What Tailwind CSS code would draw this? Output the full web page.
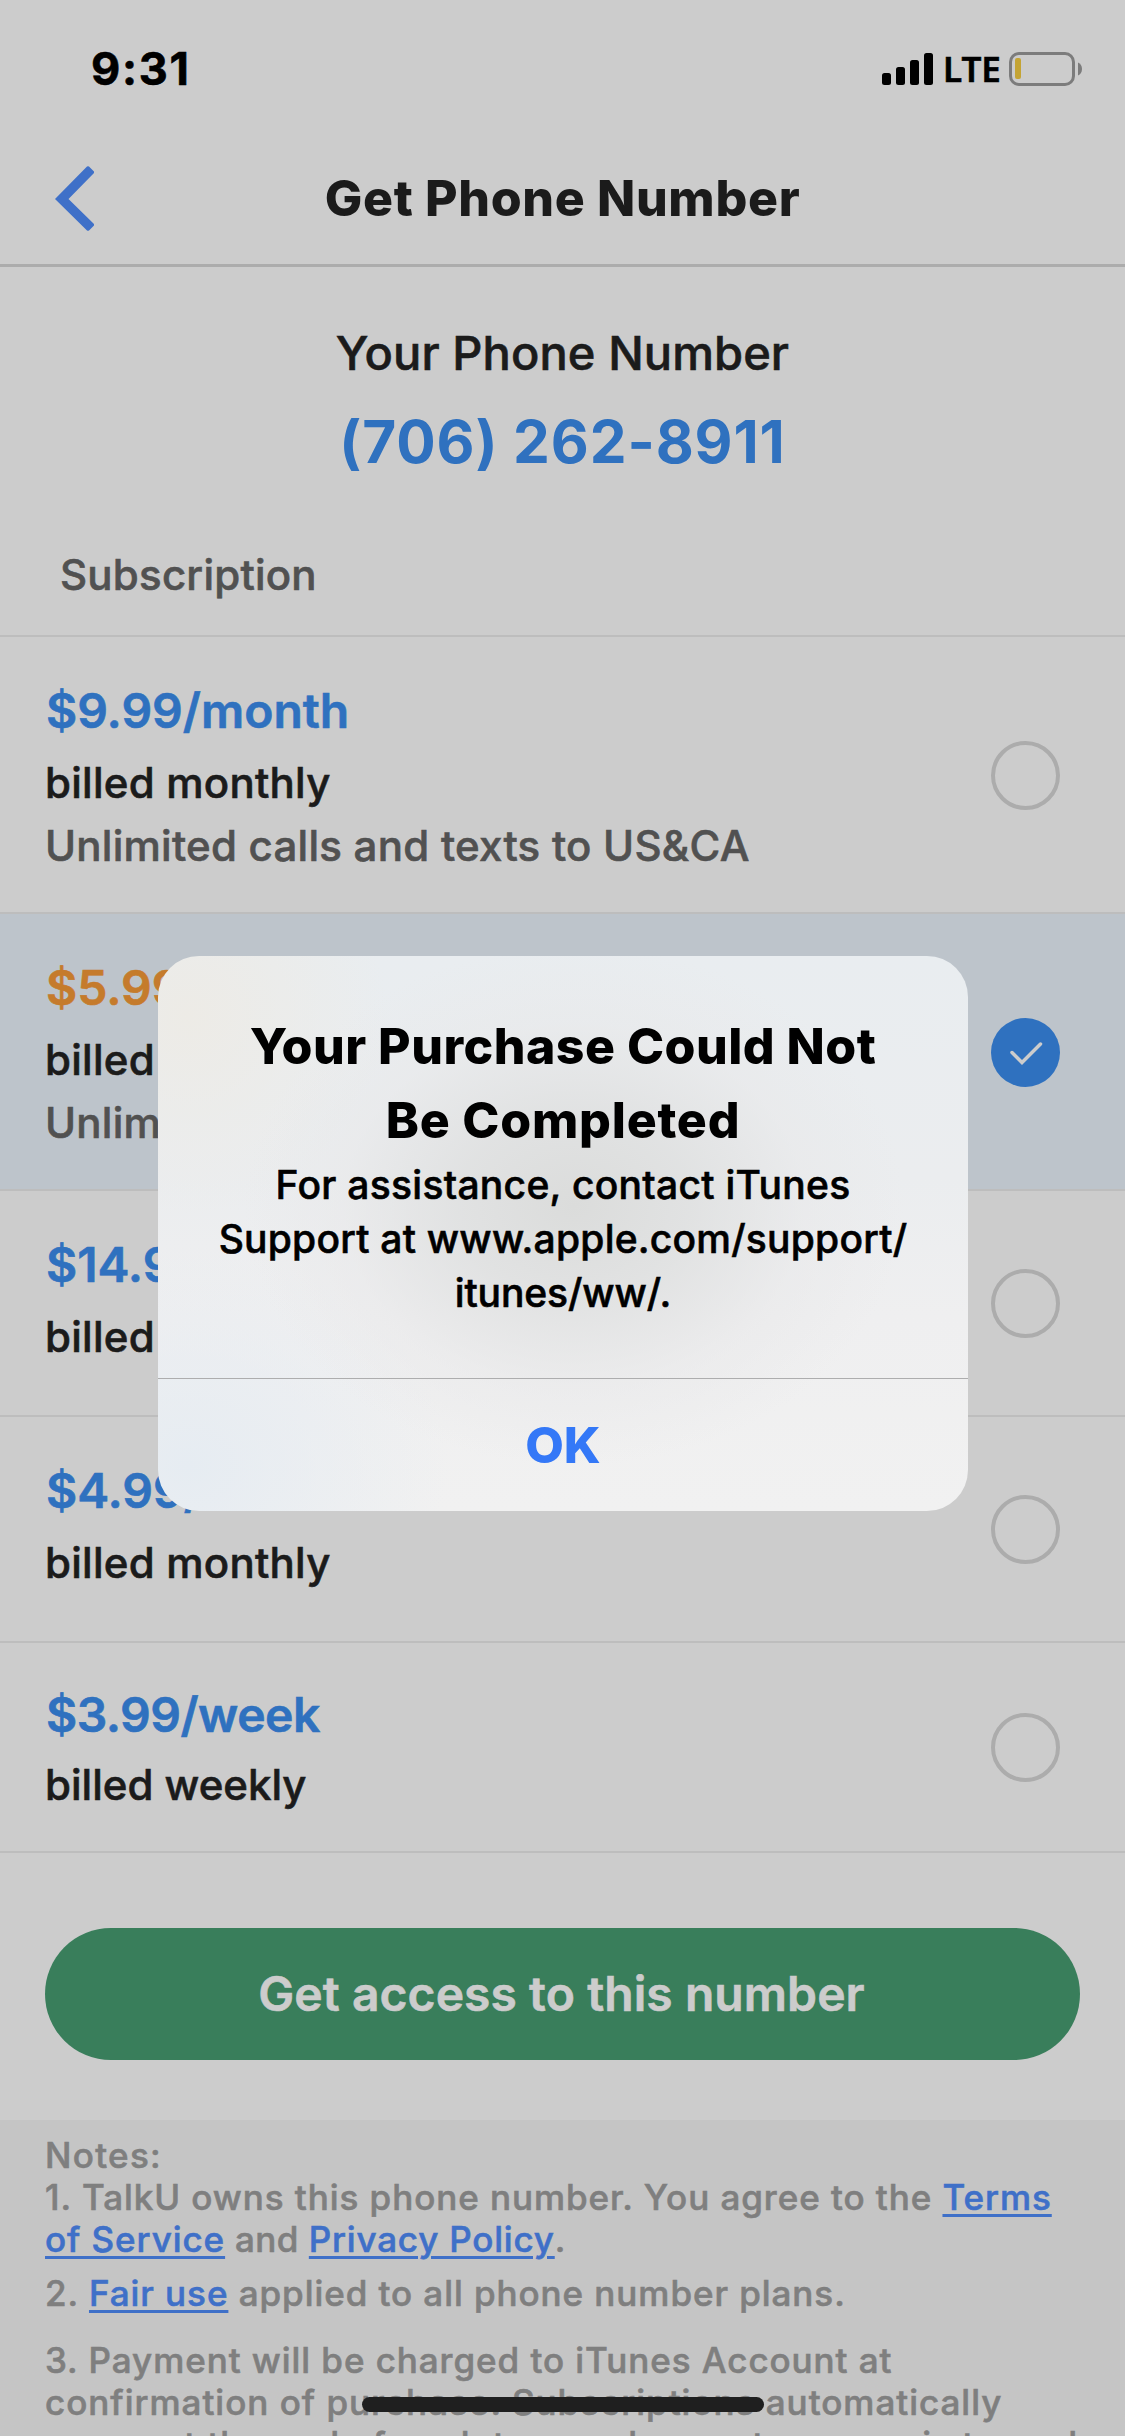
<!DOCTYPE html>
<html lang="en">
<head>
<meta charset="utf-8">
<title>Get Phone Number</title>
<script src="https://cdn.jsdelivr.net/npm/@tailwindcss/browser@4"></script>
</head>
<body class="bg-[#cccccc]">
<div class="relative flex h-[2436px] w-[1125px] flex-col overflow-hidden bg-[#cccccc] font-['Inter',sans-serif] font-medium whitespace-nowrap text-[#1b1b1b] [-webkit-text-stroke:0.6px_currentColor]">

  <!-- Status bar -->
  <div class="flex h-[136px] shrink-0 items-center pr-[43px] pl-[91px] text-black">
    <div class="mt-[2px] text-[45px] leading-[46px] font-bold tracking-[1.7px]">9:31</div>
    <svg class="mt-[2px] ml-auto" width="51" height="32" viewBox="0 0 51 32">
      <rect x="0" y="20" width="9" height="12" rx="2.5"/>
      <rect x="14" y="14" width="9" height="18" rx="2.5"/>
      <rect x="28" y="7" width="9" height="25" rx="2.5"/>
      <rect x="42" y="0" width="9" height="32" rx="2.5"/>
    </svg>
    <div class="mt-px w-[76px] pl-[10px] font-['Noto_Sans',sans-serif] text-[35px] leading-[40px] font-semibold">LTE</div>
    <svg class="mt-[2px]" width="73" height="34" viewBox="0 0 73 34">
      <rect x="1.5" y="1.5" width="63" height="31" rx="8.5" fill="none" stroke="#7c7c7c" stroke-width="3"/>
      <rect x="6" y="6" width="6" height="21" rx="2" fill="#c4a434"/>
      <path d="M69 10.5C71.5 11.5 73 14 73 17S71.500 22.500 69 23.500Z" fill="#7c7c7c"/>
    </svg>
  </div>

  <!-- Navigation bar -->
  <div class="grid h-[131px] shrink-0 grid-cols-[200px_1fr_200px] items-center border-b-[3px] border-[#acacac] pb-[4px]">
    <svg class="ml-[55px]" width="39" height="65" viewBox="0 0 39 65" fill="#3f70c8"><path d="M0 33 32 0.500Q33 0 34 0.500L39 5.500V7L13.500 33 39 58V59.500L34 64.500Q33 65 32 64.500Z"/></svg>
    <div class="text-center text-[50px] leading-[60px] font-extrabold tracking-[0.66px] [-webkit-text-stroke:0px]">Get Phone Number</div>
  </div>

  <!-- Chosen number -->
  <div class="flex shrink-0 flex-col border-b-2 border-[#bdbdbd] pt-[56px] pb-[35px]">
    <div class="text-center text-[47px] leading-[60px] tracking-[0.1px]">Your Phone Number</div>
    <div class="mt-[19px] text-center text-[58.5px] leading-[80px] font-bold tracking-[0.88px] text-[#2f71bf] [-webkit-text-stroke:0px]">(706) 262-8911</div>
    <div class="mt-[68px] ml-[60px] text-[42px] leading-[50px] tracking-[0.23px] text-[#515151]">Subscription</div>
  </div>

  <!-- Plans -->
  <div class="flex h-[277px] shrink-0 items-center justify-between border-b-2 border-[#bdbdbd] pr-[65px] pl-[45px]">
    <div class="self-start pt-[44px]">
      <div class="ml-px text-[48px] leading-[60px] font-semibold text-[#2f71bf]">$9.99/month</div>
      <div class="mt-[17px] text-[42px] leading-[50px] tracking-[0.25px]">billed monthly</div>
      <div class="mt-[13px] text-[42px] leading-[50px] tracking-[0.25px] text-[#515151]">Unlimited calls and texts to US&amp;CA</div>
    </div>
    <div class="mt-[2px] size-[69px] rounded-full border-4 border-[#acacac]"></div>
  </div>

  <div class="flex h-[277px] shrink-0 items-center justify-between border-b-2 border-[#bdbdbd] bg-[#bdc4cb] pr-[65px] pl-[45px]">
    <div class="self-start pt-[44px]">
      <div class="ml-px text-[48px] leading-[60px] font-semibold text-[#c57b2c]">$5.99/month</div>
      <div class="mt-[17px] text-[42px] leading-[50px] tracking-[0.25px]">billed monthly</div>
      <div class="mt-[13px] text-[42px] leading-[50px] tracking-[0.25px] text-[#515151]">Unlimited calls and texts to US&amp;CA</div>
    </div>
    <svg class="mt-[2px]" width="69" height="69" viewBox="0 0 69 69">
      <circle cx="34.500" cy="34.500" r="34.500" fill="#2f71bf"/>
      <path d="M21 34.500 31 44.500 49.500 26" fill="none" stroke="#cccccc" stroke-width="3.500" stroke-linecap="round"/>
    </svg>
  </div>

  <div class="flex h-[226px] shrink-0 items-center justify-between border-b-2 border-[#bdbdbd] pr-[65px] pl-[45px]">
    <div class="self-start pt-[44px]">
      <div class="ml-px text-[48px] leading-[60px] font-semibold text-[#2f71bf]">$14.99/month</div>
      <div class="mt-[17px] text-[42px] leading-[50px] tracking-[0.25px]">billed monthly</div>
    </div>
    <div class="mt-px size-[69px] rounded-full border-4 border-[#acacac]"></div>
  </div>

  <div class="flex h-[226px] shrink-0 items-center justify-between border-b-2 border-[#bdbdbd] pr-[65px] pl-[45px]">
    <div class="self-start pt-[44px]">
      <div class="ml-px text-[48px] leading-[60px] font-semibold text-[#2f71bf]">$4.99/month</div>
      <div class="mt-[17px] text-[42px] leading-[50px] tracking-[0.25px]">billed monthly</div>
    </div>
    <div class="mt-px size-[69px] rounded-full border-4 border-[#acacac]"></div>
  </div>

  <div class="flex h-[210px] shrink-0 items-center justify-between border-b-2 border-[#bdbdbd] pr-[65px] pl-[45px]">
    <div class="self-start pt-[42px]">
      <div class="ml-px text-[48px] leading-[60px] font-semibold tracking-[-0.5px] text-[#2f71bf]">$3.99/week</div>
      <div class="mt-[15px] text-[42px] leading-[50px]">billed weekly</div>
    </div>
    <div class="mt-px size-[69px] rounded-full border-4 border-[#acacac]"></div>
  </div>

  <button class="mx-[45px] mt-[75px] flex h-[132px] shrink-0 items-center justify-center rounded-full bg-[#397e5b] pr-[2px] text-[48px] leading-[60px] font-semibold tracking-[0.07px] text-[#cccccc]">Get access to this number</button>

  <!-- Notes -->
  <div class="mt-[60px] h-[316px] shrink-0 overflow-hidden bg-[#c5c5c5] pt-[14px] pl-[45px] text-[35px] leading-[42px] tracking-[0.94px] text-[#7f7f7f]">
    <p class="tracking-[1.3px]">Notes:</p>
    <p>1. TalkU owns this phone number. You agree to the <a class="text-[#3f70c8] underline decoration-[3px] underline-offset-[4px]">Terms<br>of Service</a><span class="tracking-[0.5px]"> and </span><a class="tracking-[0.8px] text-[#3f70c8] underline decoration-[3px] underline-offset-[4px]">Privacy Policy</a>.</p>
    <p class="mt-[12px]">2. <a class="text-[#3f70c8] underline decoration-[3px] underline-offset-[4px]">Fair use</a> applied to all phone number plans.</p>
    <p class="mt-[25px]">3. Payment will be charged to iTunes Account at<br><span class="tracking-[0.99px]">confirmation of purchase. Subscriptions automatically</span><br>renew at the end of each term unless auto-renew is turned</p>
  </div>

  <!-- Home indicator -->
  <div class="absolute top-[2397px] left-[362px] h-[15px] w-[402px] rounded-full bg-[#1f1f1f]"></div>

  <!-- Alert -->
  <div class="absolute top-[956px] left-[158px] flex h-[555px] w-[810px] flex-col overflow-hidden rounded-[41px] bg-[#eeeeef] bg-[radial-gradient(ellipse_330px_260px_at_416px_250px,#dbdcdb_0%,#dfe0e0d9_35%,#e8e8e980_70%,#eeeeef00_100%),radial-gradient(circle_200px_at_30px_60px,#edebe6_0%,#edebe600_100%),radial-gradient(ellipse_260px_220px_at_30px_510px,#e6ecf2_0%,#e6ecf200_100%),linear-gradient(to_bottom,#e9edf0_0%,#ebedef_40%,#efeff0_65%,#f1f1f1_100%)] text-center text-black">
    <div class="h-[422px] shrink-0 pt-[53px]">
      <div class="text-[50px] leading-[74px] font-extrabold tracking-[0.47px] [-webkit-text-stroke:0px]">Your Purchase Could Not<br><span class="tracking-[0.78px]">Be Completed</span></div>
      <div class="mt-px text-[39px] leading-[54px] tracking-[0.28px]">For assistance, contact iTunes<br><span class="tracking-[0.22px]">Support at www.apple.com/support/</span><br><span class="tracking-[-0.1px]">itunes/ww/.</span></div>
    </div>
    <div class="flex grow items-center justify-center border-t border-[#adadae] text-[50px] leading-[60px] font-extrabold text-[#3478f7] [-webkit-text-stroke:0px]">OK</div>
  </div>
</div>
</body>
</html>
